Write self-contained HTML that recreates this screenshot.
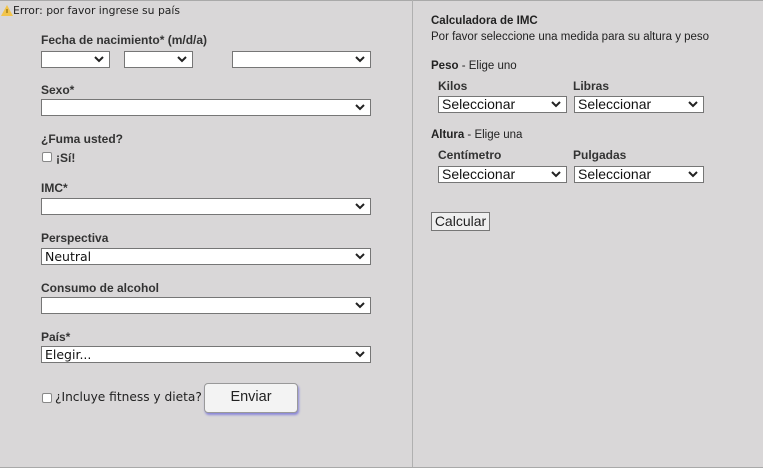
<!DOCTYPE html>
<html><head><meta charset="utf-8"><style>
*{box-sizing:border-box;margin:0;padding:0}
body{width:763px;height:468px;background:#d9d7d8;font-family:"Liberation Sans",Arial,sans-serif;color:#222;position:relative;overflow:hidden}
.a{position:absolute;white-space:nowrap}
.l{font-size:12px;font-weight:bold;color:#333}
.s{position:absolute;background:#fff;border:1px solid #767676;height:17px;font-size:13px;padding-left:3px;line-height:15px;color:#111}
.s svg{position:absolute;right:5px;top:4px}
.r{font-size:14px;line-height:15px}
.cb{position:absolute;width:10px;height:10px;border:1px solid #888;background:#fff;border-radius:2px}
.t{font-size:11.5px}
</style></head><body>
<div class="a" style="left:0;top:0;width:763px;height:1px;background:#a9a9a9"></div>
<div class="a" style="left:412px;top:0;width:1px;height:468px;background:#b0b0b0"></div>
<div class="a" style="left:0;top:467px;width:763px;height:1px;background:#a9a9a9"></div>
<svg class="a" style="left:1px;top:5px" width="12" height="11"><polygon points="6,0 12,11 0,11" fill="#f2c44a"/><rect x="5.5" y="4" width="1" height="4" fill="#7a5a00"/></svg>
<div class="a" style="left:13px;top:4px;font-family:'DejaVu Sans',sans-serif;font-size:10.8px;color:#222">Error: por favor ingrese su país</div>

<div class="a l" style="left:41px;top:33px">Fecha de nacimiento* (m/d/a)</div>
<div class="s" style="left:41px;top:51px;width:69px"><svg width="10" height="7"><path d="M1 1l4 4 4-4" stroke="#222" stroke-width="2" fill="none"/></svg></div>
<div class="s" style="left:124px;top:51px;width:69px"><svg width="10" height="7"><path d="M1 1l4 4 4-4" stroke="#222" stroke-width="2" fill="none"/></svg></div>
<div class="s" style="left:232px;top:51px;width:139px"><svg width="10" height="7"><path d="M1 1l4 4 4-4" stroke="#222" stroke-width="2" fill="none"/></svg></div>

<div class="a l" style="left:41px;top:83px">Sexo*</div>
<div class="s" style="left:41px;top:99px;width:330px"><svg width="10" height="7"><path d="M1 1l4 4 4-4" stroke="#222" stroke-width="2" fill="none"/></svg></div>

<div class="a l" style="left:41px;top:132px">¿Fuma usted?</div>
<div class="cb" style="left:42px;top:152px"></div>
<div class="a l" style="left:56px;top:151px">¡Sí!</div>

<div class="a l" style="left:41px;top:181px">IMC*</div>
<div class="s" style="left:41px;top:198px;width:330px"><svg width="10" height="7"><path d="M1 1l4 4 4-4" stroke="#222" stroke-width="2" fill="none"/></svg></div>

<div class="a l" style="left:41px;top:231px">Perspectiva</div>
<div class="s" style="left:41px;top:248px;width:330px;font-family:'DejaVu Sans',sans-serif;font-size:12.5px">Neutral<svg width="10" height="7"><path d="M1 1l4 4 4-4" stroke="#222" stroke-width="2" fill="none"/></svg></div>

<div class="a l" style="left:41px;top:281px">Consumo de alcohol</div>
<div class="s" style="left:41px;top:297px;width:330px"><svg width="10" height="7"><path d="M1 1l4 4 4-4" stroke="#222" stroke-width="2" fill="none"/></svg></div>

<div class="a l" style="left:41px;top:330px">País*</div>
<div class="s" style="left:41px;top:346px;width:330px;font-family:'DejaVu Sans',sans-serif;font-size:12.5px">Elegir...<svg width="10" height="7"><path d="M1 1l4 4 4-4" stroke="#222" stroke-width="2" fill="none"/></svg></div>

<div class="cb" style="left:42px;top:393px"></div>
<div class="a" style="left:55px;top:390px;font-family:'DejaVu Sans',sans-serif;font-size:12.2px;color:#222">¿Incluye fitness y dieta?</div>
<div class="a" style="left:204px;top:383px;width:94px;height:30px;border:1px solid #999;border-radius:4px;background:#f3f3f3;box-shadow:1px 2px 2px #8a86d8;font-size:14.5px;text-align:center;line-height:27px">Enviar</div>

<div class="a t" style="left:431px;top:15px;font-weight:bold">Calculadora de IMC</div>
<div class="a t" style="left:431px;top:31px">Por favor seleccione una medida para su altura y peso</div>
<div class="a t" style="left:431px;top:60px"><b>Peso</b> - Elige uno</div>
<div class="a l" style="left:438px;top:79px">Kilos</div>
<div class="a l" style="left:573px;top:79px">Libras</div>
<div class="s r" style="left:438px;top:96px;width:129px">Seleccionar<svg width="10" height="7"><path d="M1 1l4 4 4-4" stroke="#222" stroke-width="2" fill="none"/></svg></div>
<div class="s r" style="left:574px;top:96px;width:130px">Seleccionar<svg width="10" height="7"><path d="M1 1l4 4 4-4" stroke="#222" stroke-width="2" fill="none"/></svg></div>
<div class="a t" style="left:431px;top:129px"><b>Altura</b> - Elige una</div>
<div class="a l" style="left:438px;top:148px">Centímetro</div>
<div class="a l" style="left:573px;top:148px">Pulgadas</div>
<div class="s r" style="left:438px;top:166px;width:129px">Seleccionar<svg width="10" height="7"><path d="M1 1l4 4 4-4" stroke="#222" stroke-width="2" fill="none"/></svg></div>
<div class="s r" style="left:574px;top:166px;width:130px">Seleccionar<svg width="10" height="7"><path d="M1 1l4 4 4-4" stroke="#222" stroke-width="2" fill="none"/></svg></div>
<div class="a" style="left:431px;top:212px;width:59px;height:19px;border:1px solid #767676;background:#efefef;font-size:14px;text-align:center;line-height:17px">Calcular</div>
</body></html>
